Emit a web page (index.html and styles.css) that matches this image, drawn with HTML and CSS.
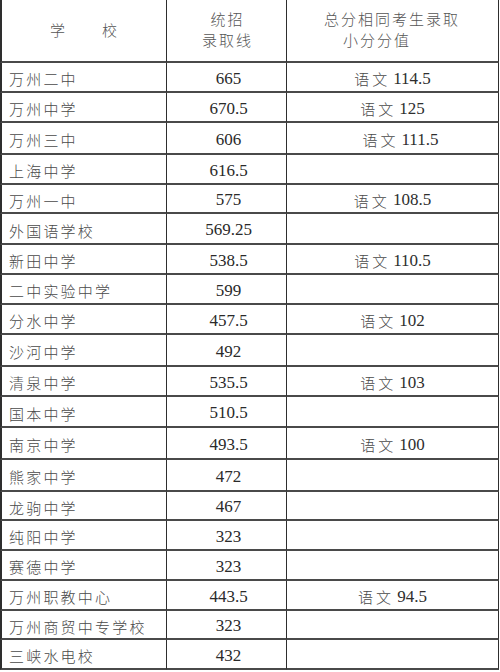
FILE: index.html
```html
<!DOCTYPE html>
<html lang="zh">
<head>
<meta charset="utf-8">
<link rel="stylesheet" href="styles.css">
</head>
<body>
<div class="sheet">
  <div class="cell head school-head"><span>学</span><span>校</span></div>
  <div class="cell head line-head"><span>统招</span><span>录取线</span></div>
  <div class="cell head score-head"><span class="h1">总分相同考生录取</span><span class="h2">小分分值</span></div>

  <div class="cell name">万州二中</div><div class="cell num">665</div><div class="cell sub"><span class="lang">语文</span>114.5</div>
  <div class="cell name">万州中学</div><div class="cell num">670.5</div><div class="cell sub"><span class="lang">语文</span>125</div>
  <div class="cell name">万州三中</div><div class="cell num">606</div><div class="cell sub shift"><span class="lang">语文</span>111.5</div>
  <div class="cell name">上海中学</div><div class="cell num">616.5</div><div class="cell sub"></div>
  <div class="cell name">万州一中</div><div class="cell num">575</div><div class="cell sub"><span class="lang">语文</span>108.5</div>
  <div class="cell name">外国语学校</div><div class="cell num">569.25</div><div class="cell sub"></div>
  <div class="cell name">新田中学</div><div class="cell num">538.5</div><div class="cell sub"><span class="lang">语文</span>110.5</div>
  <div class="cell name">二中实验中学</div><div class="cell num">599</div><div class="cell sub"></div>
  <div class="cell name">分水中学</div><div class="cell num">457.5</div><div class="cell sub"><span class="lang">语文</span>102</div>
  <div class="cell name">沙河中学</div><div class="cell num">492</div><div class="cell sub"></div>
  <div class="cell name">清泉中学</div><div class="cell num">535.5</div><div class="cell sub"><span class="lang">语文</span>103</div>
  <div class="cell name">国本中学</div><div class="cell num">510.5</div><div class="cell sub"></div>
  <div class="cell name">南京中学</div><div class="cell num">493.5</div><div class="cell sub"><span class="lang">语文</span>100</div>
  <div class="cell name">熊家中学</div><div class="cell num">472</div><div class="cell sub"></div>
  <div class="cell name">龙驹中学</div><div class="cell num">467</div><div class="cell sub"></div>
  <div class="cell name">纯阳中学</div><div class="cell num">323</div><div class="cell sub"></div>
  <div class="cell name">赛德中学</div><div class="cell num">323</div><div class="cell sub"></div>
  <div class="cell name">万州职教中心</div><div class="cell num">443.5</div><div class="cell sub"><span class="lang">语文</span>94.5</div>
  <div class="cell name">万州商贸中专学校</div><div class="cell num">323</div><div class="cell sub"></div>
  <div class="cell name">三峡水电校</div><div class="cell num">432</div><div class="cell sub"></div>
</div>
</body>
</html>
```

FILE: styles.css
```css
html, body {
  margin: 0;
  padding: 0;
  background: #ffffff;
}

.sheet {
  display: grid;
  width: 499px;
  grid-template-columns: 167px 120px 212px;
  grid-template-rows: 63px 30px 30px 32px 30px 29px 31px 30px 30px 30px 32px 30px 31px 32px 32px 29px 30px 30px 30px 29px 30px;
  font-family: "Noto Sans CJK SC", "Liberation Serif", serif;
  color: #4a4a4a;
}

.cell {
  box-sizing: border-box;
  border-right: 1px solid #2e2e2e;
  border-bottom: 2px solid #4a4a4a;
  display: flex;
  align-items: center;
  padding-top: 3px;
}

.cell:nth-child(3n+1) {
  border-left: 2px solid #2e2e2e;
}

.head {
  font-size: 15px;
  font-weight: 300;
  letter-spacing: 2px;
  line-height: 21px;
  padding-top: 0;
  color: #555;
}

.school-head {
  padding-left: 48px;
  gap: 35px;
  padding-bottom: 2px;
}

.line-head {
  flex-direction: column;
  justify-content: center;
  padding-left: 2px;
  padding-bottom: 4px;
}

.score-head {
  flex-direction: column;
  align-items: flex-start;
  justify-content: center;
  padding-left: 37px;
  padding-bottom: 4px;
}

.score-head .h2 {
  margin-left: 19px;
}

.name {
  padding-left: 7px;
  font-size: 15px;
  font-weight: 300;
  letter-spacing: 2.2px;
  color: #4a4a4a;
}

.num {
  justify-content: center;
  font-family: "Liberation Serif", serif;
  font-size: 17px;
  color: #2a2a2a;
  padding-left: 4px;
}

.sub {
  justify-content: center;
  font-family: "Liberation Serif", serif;
  font-size: 17px;
  color: #2e2e2e;
}

.lang {
  font-family: "Noto Sans CJK SC", sans-serif;
  font-size: 15px;
  font-weight: 300;
  letter-spacing: 3px;
  color: #4a4a4a;
  margin-right: 3px;
}

.shift {
  padding-left: 16px;
}
```
